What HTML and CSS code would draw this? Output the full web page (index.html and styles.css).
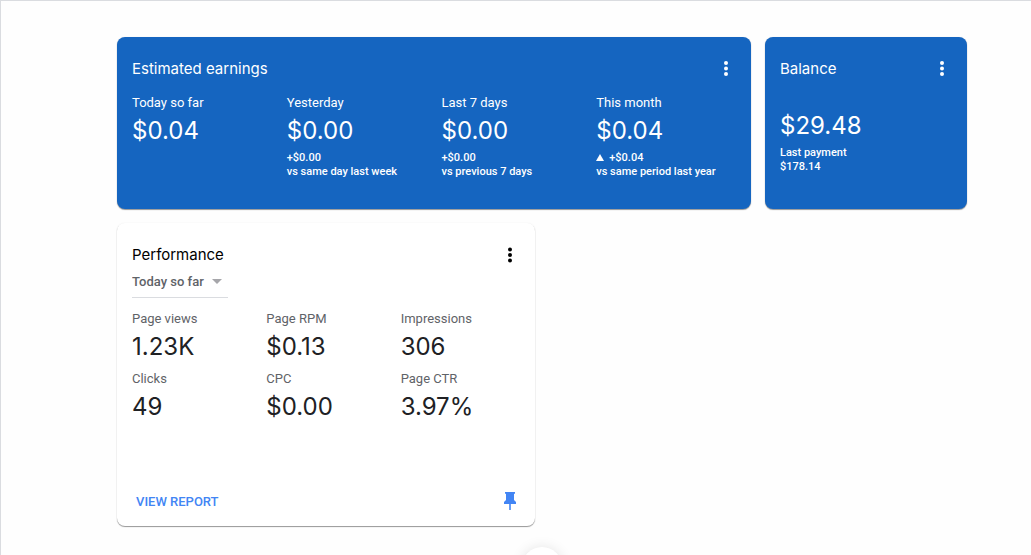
FILE: index.html
```html
<!DOCTYPE html>
<html lang="en">
<head>
    <meta charset="UTF-8">
    <meta name="viewport" content="width=device-width, initial-scale=1.0">
    <title>Home</title>
    <link rel="stylesheet" href="styles.css">
</head>
<body>
    <main class="page">
        <div class="cards">
            <section class="card card-blue earnings">
                <div class="card-header">
                    <h2>Estimated earnings</h2>
                    <button class="menu-btn" type="button" aria-label="Earnings menu">
                        <svg width="24" height="24" viewBox="0 0 24 24"><circle cx="12" cy="6" r="2"/><circle cx="12" cy="11.5" r="2"/><circle cx="12" cy="17" r="2"/></svg>
                    </button>
                </div>
                <div class="earnings-grid">
                    <div class="metric">
                        <div class="label">Today so far</div>
                        <div class="value">$0.04</div>
                    </div>
                    <div class="metric">
                        <div class="label">Yesterday</div>
                        <div class="value">$0.00</div>
                        <div class="note">+$0.00<br>vs same day last week</div>
                    </div>
                    <div class="metric">
                        <div class="label">Last 7 days</div>
                        <div class="value">$0.00</div>
                        <div class="note">+$0.00<br>vs previous 7 days</div>
                    </div>
                    <div class="metric">
                        <div class="label">This month</div>
                        <div class="value">$0.04</div>
                        <div class="note"><span class="up"></span>+$0.04<br>vs same period last year</div>
                    </div>
                </div>
            </section>

            <section class="card card-blue balance">
                <div class="card-header">
                    <h2>Balance</h2>
                    <button class="menu-btn" type="button" aria-label="Balance menu">
                        <svg width="24" height="24" viewBox="0 0 24 24"><circle cx="12" cy="6" r="2"/><circle cx="12" cy="11.5" r="2"/><circle cx="12" cy="17" r="2"/></svg>
                    </button>
                </div>
                <div class="value">$29.48</div>
                <div class="note">Last payment<br>$178.14</div>
            </section>

            <section class="card performance">
                <div class="card-header">
                    <h2>Performance</h2>
                    <button class="menu-btn" type="button" aria-label="Performance menu">
                        <svg width="24" height="24" viewBox="0 0 24 24"><circle cx="12" cy="6.5" r="2"/><circle cx="12" cy="12" r="2"/><circle cx="12" cy="17.5" r="2"/></svg>
                    </button>
                </div>
                <div class="range">
                    <select aria-label="Date range">
                        <option>Today so far</option>
                    </select>
                </div>
                <div class="performance-grid">
                    <div class="metric">
                        <div class="label">Page views</div>
                        <div class="value">1.23K</div>
                    </div>
                    <div class="metric">
                        <div class="label">Page RPM</div>
                        <div class="value">$0.13</div>
                    </div>
                    <div class="metric">
                        <div class="label">Impressions</div>
                        <div class="value">306</div>
                    </div>
                    <div class="metric">
                        <div class="label">Clicks</div>
                        <div class="value">49</div>
                    </div>
                    <div class="metric">
                        <div class="label">CPC</div>
                        <div class="value">$0.00</div>
                    </div>
                    <div class="metric">
                        <div class="label">Page CTR</div>
                        <div class="value">3.97%</div>
                    </div>
                </div>
                <div class="card-footer">
                    <a class="report-link" href="#">VIEW REPORT</a>
                    <button class="menu-btn pin-btn" type="button" aria-label="Unpin card">
                        <svg width="24" height="24" viewBox="0 0 24 24"><path d="M7 3h10v1.8h-1V11l2 2v2h-5.2v6h-1.6v-6H6v-2l2-2V4.8H7z"/></svg>
                    </button>
                </div>
            </section>
        </div>
        <button class="more-btn" type="button" aria-label="More"></button>
    </main>
</body>
</html>
```
FILE: styles.css
```css
* {
    box-sizing: border-box;
}

body {
    margin: 0;
    font-family: Roboto, Arial, sans-serif;
    background-color: #fefefe;
    color: #202124;
}

.page {
    height: 100vh;
    overflow: hidden;
    padding: 36px 64px 0 116px;
    border-top: 1px solid #dadce0;
    border-left: 1px solid #dadce0;
}

.cards {
    display: grid;
    grid-template-columns: repeat(4, 1fr);
    gap: 14px;
}

.card {
    padding: 20px 0 0 15px;
    border-radius: 8px;
    background-color: #fff;
    box-shadow: 0 1px 1px rgba(0, 0, 0, 0.4), 0 0 2px rgba(0, 0, 0, 0.05);
}

.card-blue {
    min-height: 172px;
    background-color: #1565c0;
    color: #fff;
}

.earnings {
    grid-column: span 3;
}

.performance {
    grid-column: span 2;
    min-height: 303px;
    display: flex;
    flex-direction: column;
}

.card-header {
    display: flex;
    justify-content: space-between;
    align-items: center;
    height: 24px;
    padding-right: 13px;
}

h2 {
    margin: 0;
    font-family: Inter, sans-serif;
    font-size: 15px;
    font-weight: 400;
    line-height: 24px;
}

.performance h2 {
    color: #000;
}

.menu-btn {
    display: flex;
    padding: 0;
    border: none;
    background: none;
    color: inherit;
    cursor: pointer;
}

.menu-btn svg {
    fill: currentColor;
}

.performance .card-header .menu-btn {
    color: #000;
}

.earnings-grid {
    display: grid;
    grid-template-columns: repeat(4, 1fr);
    margin-top: 13px;
}

.performance-grid {
    display: grid;
    grid-template-columns: repeat(3, 1fr);
    margin-top: 12px;
}

.label {
    font-size: 13px;
    line-height: 18px;
}

.performance .label {
    color: #5f6368;
}

.value {
    font-family: Inter, sans-serif;
    font-size: 24px;
    line-height: 38px;
}

.performance .metric {
    padding-bottom: 4px;
}

.note {
    font-size: 11px;
    font-weight: 500;
    line-height: 14px;
    margin-top: 1px;
}

.balance .value {
    margin-top: 26px;
}

.up {
    display: inline-block;
    margin-right: 5px;
    border-left: 4px solid transparent;
    border-right: 4px solid transparent;
    border-bottom: 7px solid #fff;
}

.range {
    position: relative;
    align-self: flex-start;
    width: 96px;
    margin-top: 2px;
    border-bottom: 1px solid #dadce0;
}

.range select {
    display: block;
    appearance: none;
    width: 100%;
    height: 28px;
    padding: 0 0 4px;
    border: none;
    background: none;
    color: #5f6368;
    font-family: inherit;
    font-size: 13px;
    font-weight: 500;
}

.range::after {
    content: "";
    position: absolute;
    top: 10px;
    right: 6px;
    border-left: 5px solid transparent;
    border-right: 5px solid transparent;
    border-top: 5px solid #a6a6aa;
    pointer-events: none;
}

.card-footer {
    display: flex;
    justify-content: space-between;
    align-items: center;
    margin-top: auto;
    padding: 0 13px 13px 4px;
}

.report-link {
    color: #4285f4;
    font-size: 13px;
    font-weight: 500;
    text-decoration: none;
}

.pin-btn {
    color: #4285f4;
}

.more-btn {
    display: block;
    width: 40px;
    height: 40px;
    margin: 21px auto 0;
    padding: 0;
    border: none;
    border-radius: 50%;
    background-color: #fff;
    box-shadow: 0 1px 14px rgba(0, 0, 0, 0.12);
}
```
